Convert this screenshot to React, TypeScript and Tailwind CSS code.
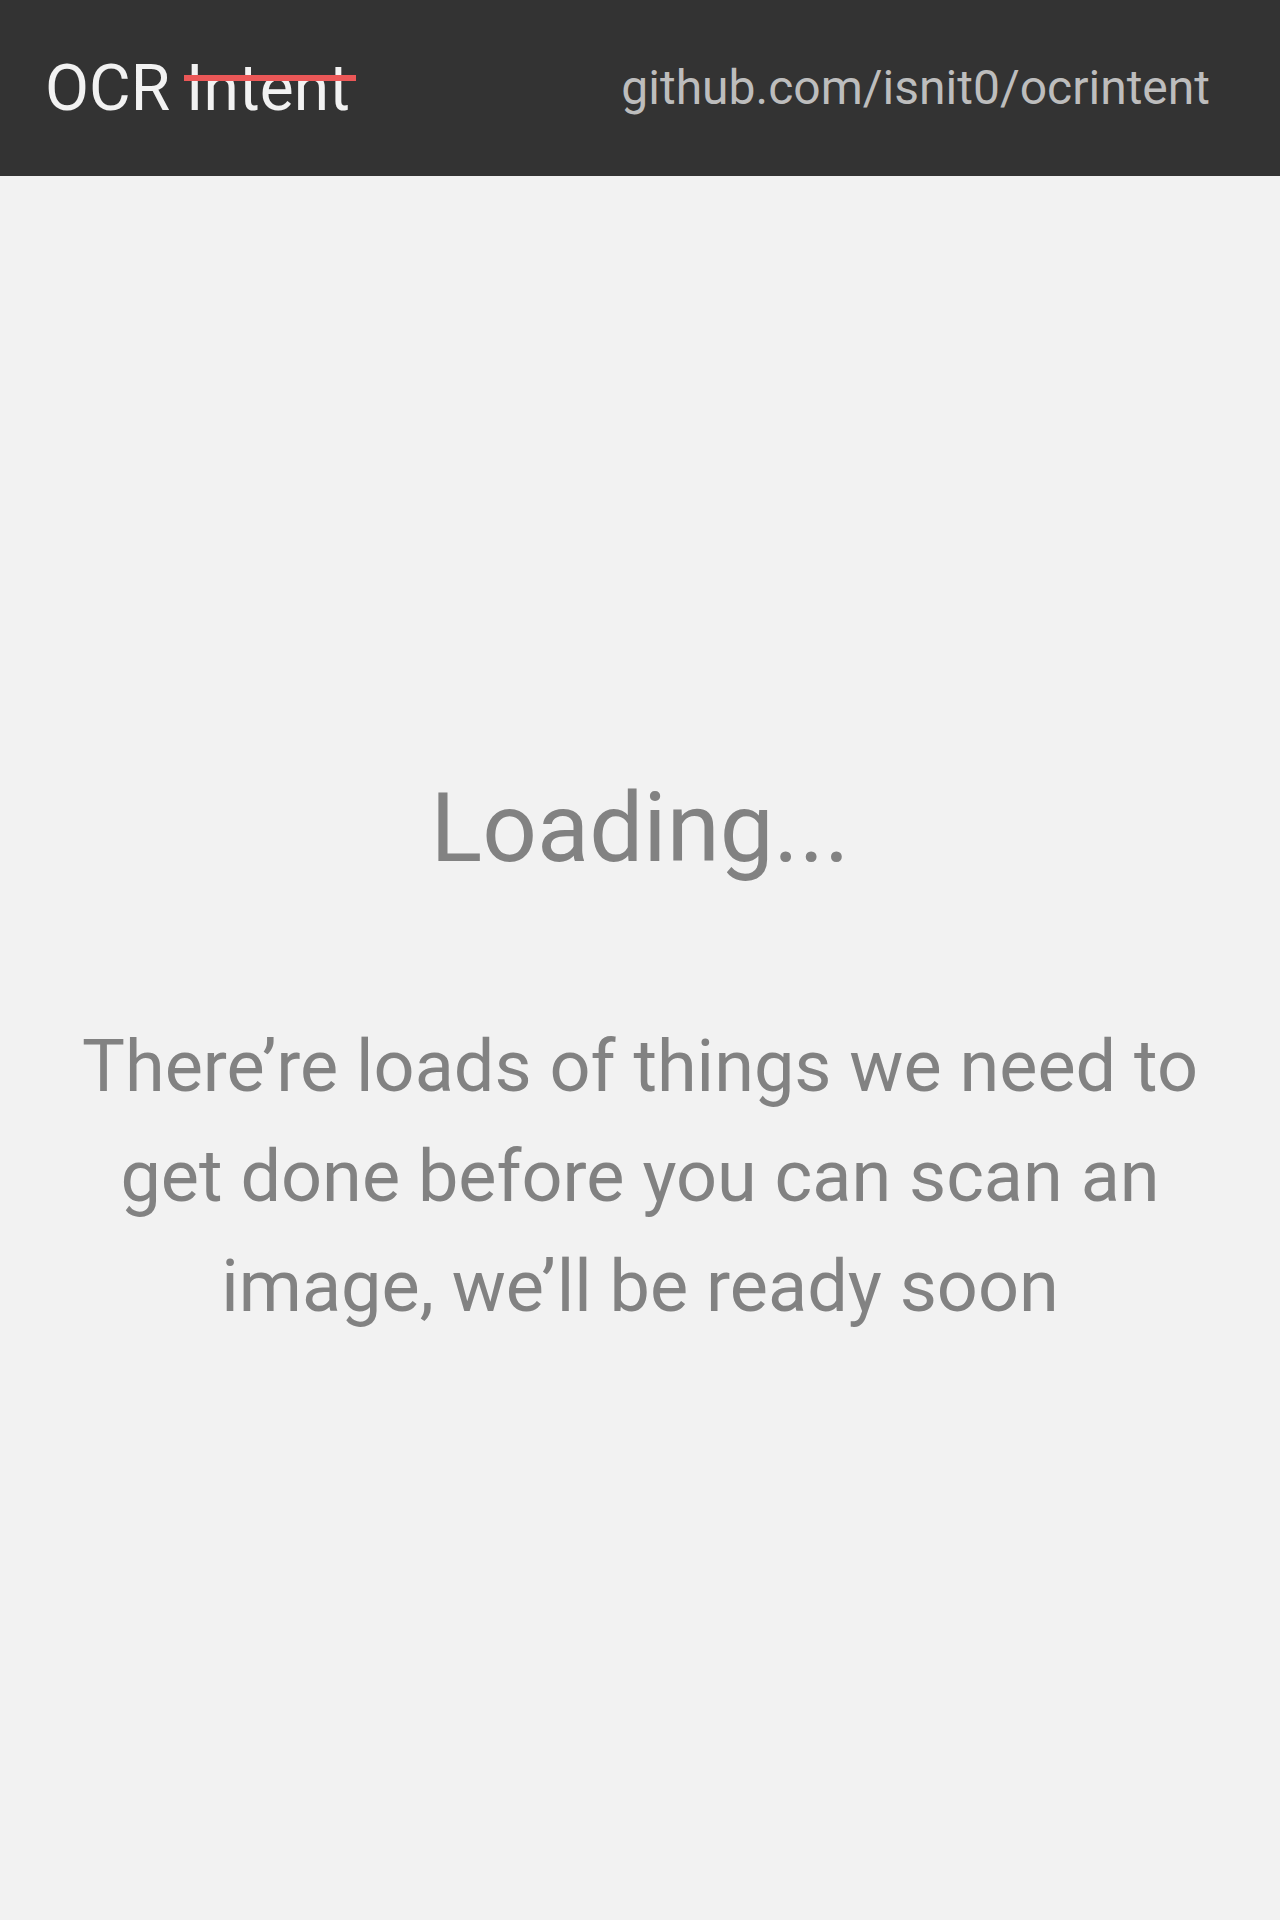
export default function App() {
  return (
    <div className="flex min-h-screen flex-col bg-[#f2f2f2] font-['Roboto',sans-serif]">
      <header className="flex h-44 items-center justify-between bg-[#333333] pr-[70px] pl-[45px]">
        <h1 className="pt-0.5 text-[64px] leading-[76px] text-[#f2f2f2]">
          OCR{" "}
          <span className="relative inline-block">
            Intent
            <span className="absolute top-6 -right-[6px] -left-[2px] h-1.5 bg-[#eb5757]" />
          </span>
        </h1>
        <a href="https://github.com/isnit0/ocrintent" className="text-[48px] leading-[56px] text-[#bdbdbd]">
          github.com/isnit0/ocrintent
        </a>
      </header>
      <main className="flex flex-1 flex-col items-center px-16 pt-[596px] text-center text-[#828282]">
        <h2 className="text-[96px] leading-[112px]">Loading...</h2>
        <p className="mt-[128px] max-w-[1152px] text-[72px] leading-[110px]">
          There’re loads of things we need to get done before you can scan an image, we’ll be ready soon
        </p>
      </main>
    </div>
  );
}
